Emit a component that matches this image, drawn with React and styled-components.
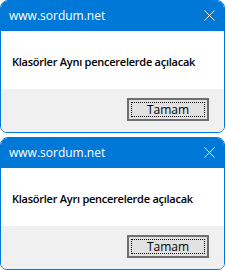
import React from "react";
import styled, { createGlobalStyle } from "styled-components";

const GlobalStyle = createGlobalStyle`
  html, body {
    margin: 0;
    padding: 0;
    background: #ffffff;
  }
  body {
    font-family: "Segoe UI", "Open Sans", "Noto Sans", sans-serif;
  }
`;

const messages = [
  "Klasörler Aynı pencerelerde açılacak",
  "Klasörler Ayrı pencerelerde açılacak",
];

function CloseIcon() {
  return (
    <svg width="11" height="11" viewBox="0 0 11 11">
      <path d="M0.5 0.5 L10.5 10.5 M10.5 0.5 L0.5 10.5" stroke="#ffffff" strokeWidth="1" fill="none" />
    </svg>
  );
}

function MessageBox({ text }) {
  return (
    <Window>
      <TitleBar>
        <Title>www.sordum.net</Title>
        <CloseButton>
          <CloseIcon />
        </CloseButton>
      </TitleBar>
      <Body>
        <Message>{text}</Message>
      </Body>
      <Footer>
        <OkButton>
          <Focus>Tamam</Focus>
        </OkButton>
      </Footer>
    </Window>
  );
}

export default function App() {
  return (
    <>
      <GlobalStyle />
      <Stack>
        {messages.map((m) => (
          <MessageBox key={m} text={m} />
        ))}
      </Stack>
    </>
  );
}

const Stack = styled.div`
  display: flex;
  flex-direction: column;
  gap: 4px;
  width: 226px;
`;

const Window = styled.div`
  width: 225px;
  height: 133px;
  box-sizing: border-box;
  display: flex;
  flex-direction: column;
  border: 1px solid #0078d7;
  border-radius: 8px 8px 7px 7px;
  overflow: hidden;
  background: #ffffff;
`;

const TitleBar = styled.div`
  height: 30px;
  flex-shrink: 0;
  background: #0078d7;
  display: flex;
  align-items: center;
  justify-content: space-between;
  padding: 0 9px 0 8px;
`;

const Title = styled.span`
  color: #ffffff;
  font-family: "Open Sans", sans-serif;
  font-size: 12px;
  padding-bottom: 1px;
`;

const CloseButton = styled.span`
  display: flex;
  align-items: center;
  padding-bottom: 1px;
`;

const Body = styled.div`
  height: 58px;
  display: flex;
  align-items: center;
  padding-left: 11px;
  background: #ffffff;
`;

const Message = styled.span`
  font-family: "Open Sans", sans-serif;
  font-size: 11px;
  font-weight: 600;
  color: #000000;
  letter-spacing: -0.25px;
  padding-top: 3px;
`;

const Footer = styled.div`
  flex: 1;
  background: #f0f0f0;
  display: flex;
  justify-content: flex-end;
  align-items: flex-start;
  padding: 9px 15px 0 0;
`;

const OkButton = styled.div`
  width: 82px;
  height: 23px;
  box-sizing: border-box;
  border: 2px solid #6f6f6f;
  background: #e1e1e1;
  padding: 2px;
  display: flex;
`;

const Focus = styled.div`
  flex: 1;
  border: 1px dotted #000000;
  display: flex;
  align-items: center;
  justify-content: center;
  font-family: "Open Sans", sans-serif;
  font-size: 12px;
  color: #000000;
`;
